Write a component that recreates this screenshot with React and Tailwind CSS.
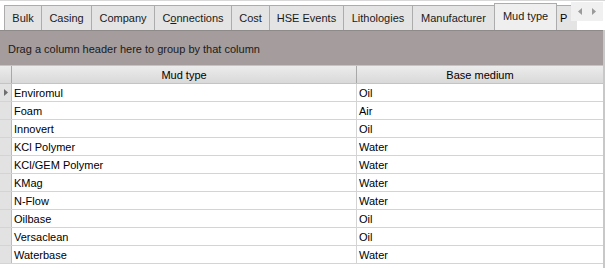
import React from "react";

const tabs = [
  { label: "Bulk", w: 37 },
  { label: "Casing", w: 50 },
  { label: "Company", w: 63 },
  { label: "Connections", w: 77, u: 1 },
  { label: "Cost", w: 38 },
  { label: "HSE Events", w: 74 },
  { label: "Lithologies", w: 69 },
  { label: "Manufacturer", w: 82 },
];

const rows = [
  ["Enviromul", "Oil"],
  ["Foam", "Air"],
  ["Innovert", "Oil"],
  ["KCl Polymer", "Water"],
  ["KCl/GEM Polymer", "Water"],
  ["KMag", "Water"],
  ["N-Flow", "Water"],
  ["Oilbase", "Oil"],
  ["Versaclean", "Oil"],
  ["Waterbase", "Water"],
];

export default function App() {
  return (
    <div
      className="w-[605px] h-[268px] bg-white overflow-hidden text-[11px] text-black flex flex-col"
      style={{ fontFamily: "'Liberation Sans', Arial, sans-serif" }}
    >
      {/* tab strip */}
      <div className="h-[30px] flex items-end pl-[4px] relative border-t border-[#d8d8d8]">
        {tabs.map((t, i) => (
          <div
            key={i}
            style={{ width: t.w }}
            className="h-[25px] shrink-0 bg-[#e4e4e4] border border-b-0 border-[#acacac] border-r-0 flex items-center justify-center pt-[1px] text-[#1a1a1a]"
          >
            {t.u ? (
              <span>
                C<span className="underline">o</span>nnections
              </span>
            ) : (
              t.label
            )}
          </div>
        ))}
        <div className="w-[63px] h-[27px] shrink-0 bg-[#efefef] border border-b-0 border-[#acacac] flex items-center justify-center pb-[2px] text-[#1a1a1a]">
          Mud type
        </div>
        <div className="w-[20px] h-[25px] shrink-0 bg-[#e4e4e4] border-t border-[#acacac] flex items-center pl-[3px] pt-[1px] overflow-hidden">
          P
        </div>
        <div className="absolute right-[2px] top-[1px] w-[32px] h-[19px] bg-[#f0f0f0] flex items-center justify-around px-[3px]">
          <svg width="5" height="7" viewBox="0 0 5 7">
            <path d="M4 0 L0 3.5 L4 7 Z" fill="#9a9a9a" />
          </svg>
          <svg width="5" height="7" viewBox="0 0 5 7">
            <path d="M1 0 L5 3.5 L1 7 Z" fill="#9a9a9a" />
          </svg>
        </div>
      </div>

      {/* body */}
      <div className="flex-1 flex flex-col border-r-2 border-[#c8c8c8]">
        <div className="h-[35px] bg-[#a59d9d] flex items-center pl-[8px] pt-[3px] text-[#1a1a1a] border-t border-[#8f8a8a]">
          Drag a column header here to group by that column
        </div>
        {/* header */}
        <div className="h-[19px] flex bg-gradient-to-b from-[#ececec] to-[#d9d9d9] border-b border-[#9a9a9a] border-t border-[#c4c4c4]">
          <div className="w-[12px] border-r border-[#a8a8a8]" />
          <div className="w-[345px] border-r border-[#a8a8a8] flex items-center justify-center pt-[2px]">
            Mud type
          </div>
          <div className="flex-1 flex items-center justify-center pt-[2px]">Base medium</div>
        </div>
        {rows.map((r, i) => (
          <div key={i} className="h-[18px] flex border-b border-[#d4d4d4]">
            <div className="w-[12px] bg-[#e2e2e2] border-r border-[#bcbcbc] flex items-center justify-center">
              {i === 0 && (
                <svg width="4" height="7" viewBox="0 0 4 7">
                  <path d="M0 0 L4 3.5 L0 7 Z" fill="#6e6e6e" />
                </svg>
              )}
            </div>
            <div className="w-[345px] border-r border-[#d4d4d4] flex items-center pl-[2px] pt-[2px]">
              {r[0]}
            </div>
            <div className="flex-1 flex items-center pl-[2px] pt-[2px]">{r[1]}</div>
          </div>
        ))}
      </div>
    </div>
  );
}
